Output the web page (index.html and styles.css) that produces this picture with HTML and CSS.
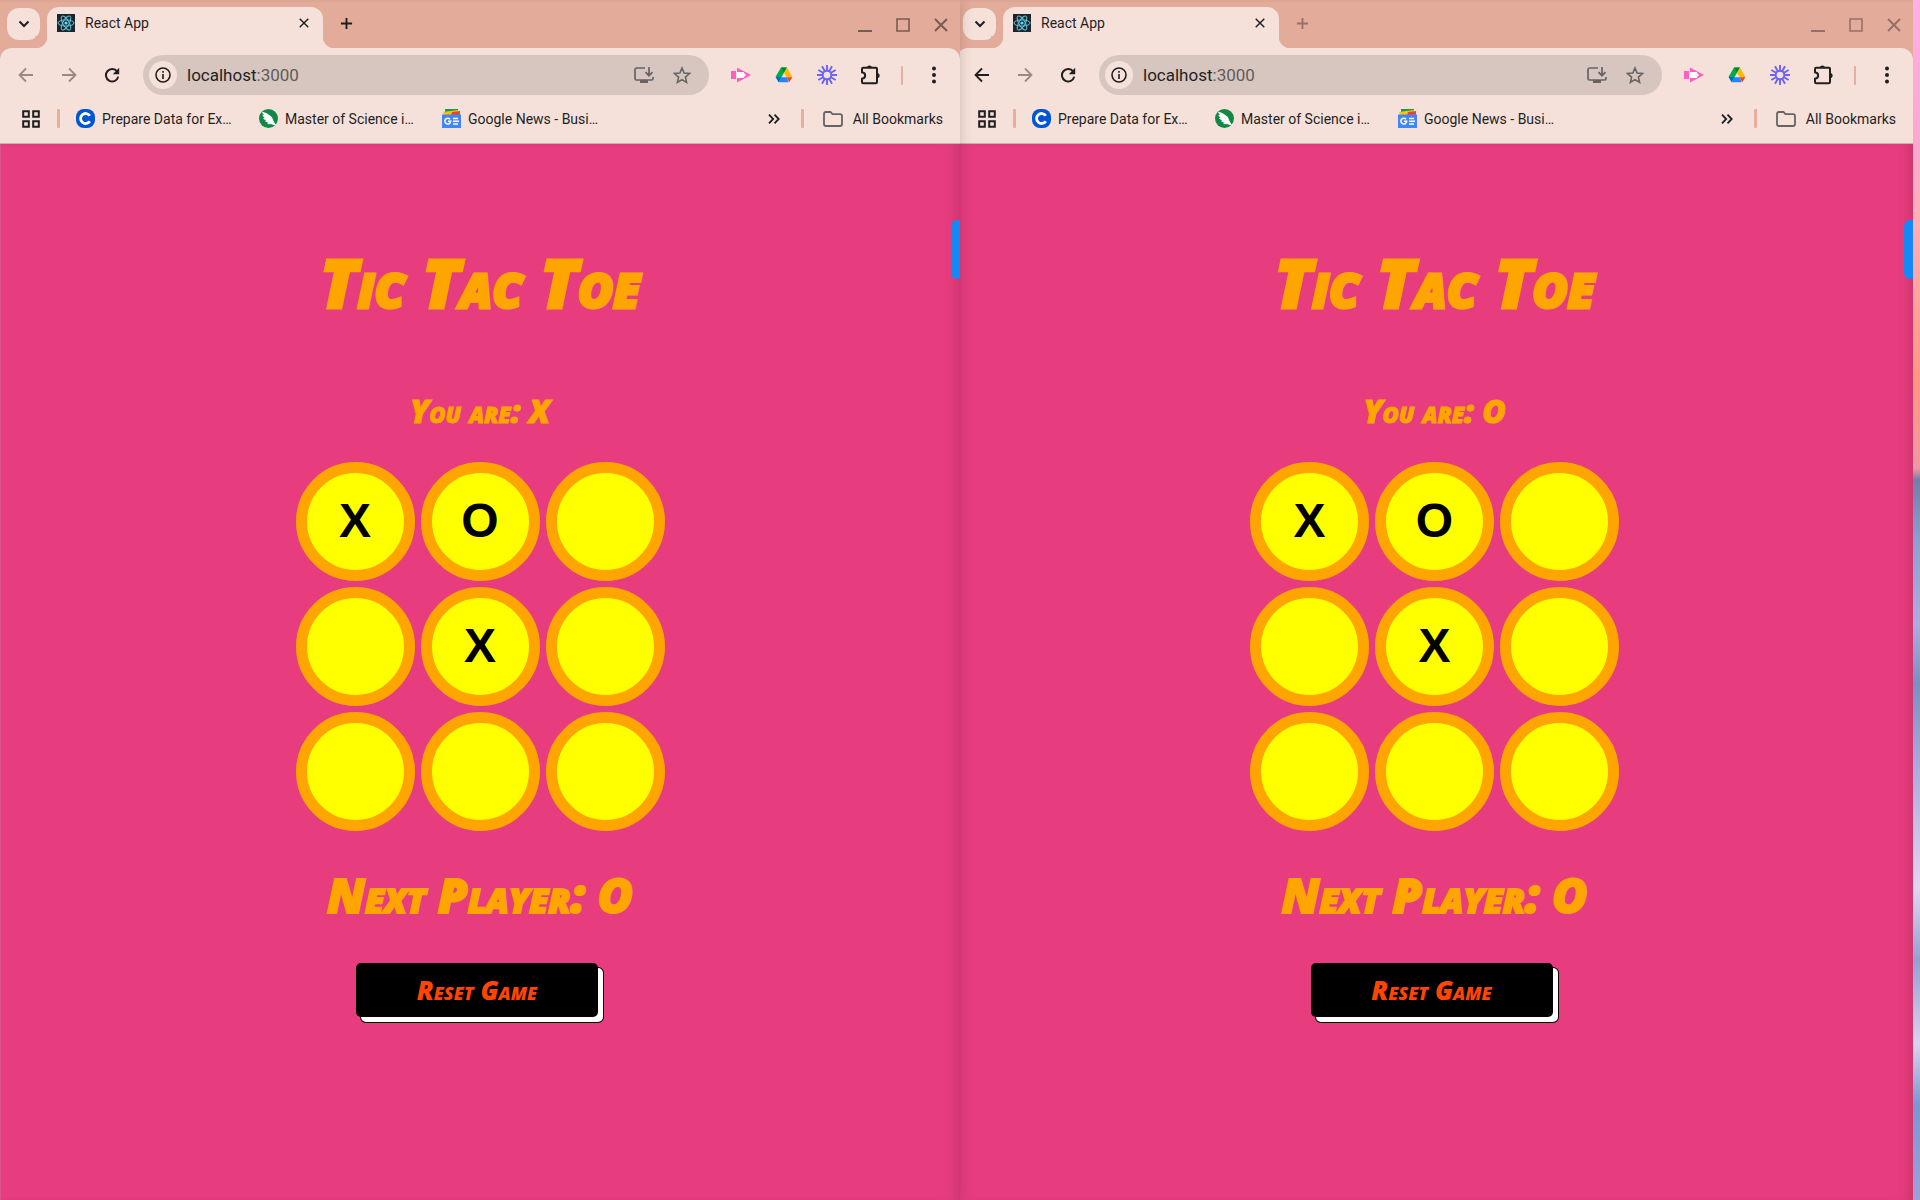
FILE: index.html
```html
<!DOCTYPE html>
<html lang="en">
<head>
<meta charset="utf-8">
<title>Tic Tac Toe</title>
<link rel="stylesheet" href="styles.css">
</head>
<body>
<svg class="sprite" aria-hidden="true">
  <symbol id="chevron" viewBox="0 0 12 12"><path d="M1.5 3.5L6 8l4.500-4.500" fill="none" stroke="currentColor" stroke-width="2"/></symbol>
  <symbol id="react" viewBox="0 0 18 18"><rect width="18" height="18" fill="#20232a"/><g fill="none" stroke="#58c4dc"><ellipse cx="9" cy="9" rx="8" ry="3.100"/><ellipse cx="9" cy="9" rx="8" ry="3.100" transform="rotate(60 9 9)"/><ellipse cx="9" cy="9" rx="8" ry="3.100" transform="rotate(120 9 9)"/></g><circle cx="9" cy="9" r="1.600" fill="#61dafb"/></symbol>
  <symbol id="cross" viewBox="0 0 14 14"><path d="M1 1l12 12M13 1L1 13" fill="none" stroke="currentColor" stroke-width="2"/></symbol>
  <symbol id="plus" viewBox="0 0 14 14"><path d="M7 1v12M1 7h12" fill="none" stroke="currentColor" stroke-width="2"/></symbol>
  <symbol id="minimize" viewBox="0 0 14 14"><path d="M0 13h14" stroke="currentColor" stroke-width="2"/></symbol>
  <symbol id="maximize" viewBox="0 0 14 14"><path d="M1 1h12v12H1z" fill="none" stroke="currentColor" stroke-width="1.600"/></symbol>
  <symbol id="back" viewBox="0 0 16 16"><path d="M15 8H2M8 1.500L1.500 8 8 14.500" fill="none" stroke="currentColor" stroke-width="1.800"/></symbol>
  <symbol id="forward" viewBox="0 0 16 16"><path d="M1 8h13M8 1.500L14.500 8 8 14.500" fill="none" stroke="currentColor" stroke-width="1.800"/></symbol>
  <symbol id="reload" viewBox="0 0 16 16"><path d="M13.200 4.700A6.200 6.200 0 1 0 14.200 9.600" fill="none" stroke="currentColor" stroke-width="2"/><path d="M15.200.8v6.400H8.800z" fill="currentColor"/></symbol>
  <symbol id="info" viewBox="0 0 16 16"><circle cx="8" cy="8" r="7" fill="none" stroke="currentColor" stroke-width="1.600"/><path d="M8 7v5M8 4v1.700" stroke="currentColor" stroke-width="1.600"/></symbol>
  <symbol id="install" viewBox="0 0 20 18"><path d="M11 2H3Q1 2 1 4v8.500q0 1.500 1.500 1.500h15q1.500 0 1.500-1.500V11" fill="none" stroke="currentColor" stroke-width="1.700"/><path d="M6 14h8v3H6z" fill="currentColor"/><path d="M15 1v8.500M11.500 6.200L15 9.700l3.500-3.500" fill="none" stroke="currentColor" stroke-width="1.700"/></symbol>
  <symbol id="star" viewBox="0 0 18 18"><path d="M9 2l2.100 5 5.400.5-4.100 3.600 1.200 5.300L9 13.600l-4.600 2.800 1.200-5.300L1.500 7.500 6.900 7z" fill="none" stroke="currentColor" stroke-width="1.600"/></symbol>
  <symbol id="arrow-ext" viewBox="0 0 20 16"><path d="M0 4h5v8H0z" fill="#ff5fc0"/><path d="M6 .5L20 8 6 15.500z" fill="#ff5fc0"/><path d="M6 5h7v1l2 2-2 2v1H6z" fill="#fff"/></symbol>
  <symbol id="drive" viewBox="0 0 18 16"><path d="M6 .5h6L9 5.700 3.800 15.200.6 9.800z" fill="#00ac47"/><path d="M6 .5h6L9 5.700z" fill="#00832d"/><path d="M12 .5l5.400 9.500h-5.900L9 5.700z" fill="#ffba00"/><path d="M.6 10h5.900l-2.700 5.200z" fill="#0066da"/><path d="M6 10.300h6l1.500 4.900H3.800z" fill="#2684fc"/><path d="M11.700 10.300h5.700l-3.200 4.900z" fill="#ea4335"/></symbol>
  <symbol id="burst" viewBox="0 0 20 20"><g stroke="#6c63f5" stroke-width="1.900"><path d="M10 0v20M0 10h20M5 1.300l10 17.400M15 1.300L5 18.700M1.300 5l17.400 10M1.300 15L18.700 5"/></g><circle cx="10" cy="10" r="5.300" fill="#6c63f5"/><circle cx="10" cy="10" r="3.300" fill="#f5e1da"/></symbol>
  <symbol id="puzzle" viewBox="0 0 20 20"><path d="M2 4q0-1.200 1.200-1.200H16q1 0 1 1V17q0 1.200-1.200 1.200H3.200Q2 18.200 2 17v-3.300c4.200-.4 4.200-6 0-6.400z" fill="none" stroke="currentColor" stroke-width="2"/><path d="M6.800 3a2.600 2.600 0 0 1 5.200 0zM17 8a2.600 2.600 0 0 1 0 5.200z" fill="currentColor"/></symbol>
  <symbol id="dots" viewBox="0 0 4 18"><g fill="currentColor"><circle cx="2" cy="2.500" r="2"/><circle cx="2" cy="9" r="2"/><circle cx="2" cy="15.500" r="2"/></g></symbol>
  <symbol id="apps" viewBox="0 0 18 18"><path d="M1.200 1.200h5.600v5.600H1.200zM11.200 1.200h5.600v5.600h-5.600zM1.200 11.200h5.600v5.600H1.200zM11.200 11.200h5.600v5.600h-5.600z" fill="none" stroke="currentColor" stroke-width="2"/></symbol>
  <symbol id="coursera" viewBox="0 0 19 19"><rect width="19" height="19" rx="8" fill="#0056d2"/><path d="M13.800 6.800A5 5 0 1 0 13.800 12.200" fill="none" stroke="#fff" stroke-width="2.800"/></symbol>
  <symbol id="leaf" viewBox="0 0 19 19"><circle cx="9.500" cy="9.500" r="9.500" fill="#118845"/><path d="M3.500 3.200l4 1.300 5 3.600 1.500 3.800 2.500 4.400-3.800-1.500-4-.2 1.800-.8-4-1.600 2-.2-4-2.600 2 0-2.700-3 1.800.3z" fill="#fff" stroke="#fff" stroke-width=".8"/></symbol>
  <symbol id="gnews" viewBox="0 0 19 19"><path d="M3 0h13v6H3z" fill="#0c9d58"/><path d="M1 3l15-2 1 5H2z" fill="#ffc107"/><path d="M10 3l8-1v5h-9z" fill="#ea4335"/><path d="M0 5.500h19V19H0z" fill="#4285f4"/><path d="M8 10.200A2.900 2.900 0 1 0 8.700 12.300H6" fill="none" stroke="#fff" stroke-width="1.500"/><path d="M11 9.500h5M11 12.300h6M11 15h5" stroke="#fff" stroke-width="1.500"/></symbol>
  <symbol id="more" viewBox="0 0 12 10"><path d="M1 .7L5.200 5 1 9.300M6.500.7L10.700 5 6.500 9.300" fill="none" stroke="currentColor" stroke-width="1.800"/></symbol>
  <symbol id="folder" viewBox="0 0 20 16"><path d="M1 3q0-2 2-2h4.500l2 2.200H17q2 0 2 2V13q0 2-2 2H3q-2 0-2-2z" fill="none" stroke="currentColor" stroke-width="1.800"/></symbol>
</svg>

<main class="desktop">
  <section class="window window-front">
    <header class="tabstrip">
      <button class="tab-search" aria-label="Search tabs"><svg width="12" height="12"><use href="#chevron"/></svg></button>
      <div class="tab">
        <svg width="18" height="18"><use href="#react"/></svg>
        <span class="tab-title">React App</span>
        <button class="plain" aria-label="Close tab"><svg width="10" height="10"><use href="#cross"/></svg></button>
      </div>
      <button class="plain new-tab" aria-label="New tab"><svg width="13" height="13"><use href="#plus"/></svg></button>
      <div class="controls">
        <button class="plain" aria-label="Minimize"><svg width="14" height="14"><use href="#minimize"/></svg></button>
        <button class="plain" aria-label="Maximize"><svg width="14" height="14"><use href="#maximize"/></svg></button>
        <button class="plain" aria-label="Close"><svg width="14" height="14"><use href="#cross"/></svg></button>
      </div>
    </header>
    <div class="toolbar">
      <nav class="nav">
        <button class="plain dim" aria-label="Back"><svg width="16" height="16"><use href="#back"/></svg></button>
        <button class="plain dim" aria-label="Forward"><svg width="16" height="16"><use href="#forward"/></svg></button>
        <button class="plain" aria-label="Reload"><svg width="16" height="16"><use href="#reload"/></svg></button>
      </nav>
      <div class="omnibox">
        <button class="site-info" aria-label="Site information"><svg width="16" height="16"><use href="#info"/></svg></button>
        <span class="url">localhost<span class="port">:3000</span></span>
        <button class="plain soft" aria-label="Install"><svg width="20" height="18"><use href="#install"/></svg></button>
        <button class="plain soft" aria-label="Bookmark"><svg width="18" height="18"><use href="#star"/></svg></button>
      </div>
      <div class="extensions">
        <button class="plain ext" aria-label="Recorder"><svg width="20" height="16"><use href="#arrow-ext"/></svg></button>
        <button class="plain ext" aria-label="Drive"><svg width="18" height="16"><use href="#drive"/></svg></button>
        <button class="plain ext" aria-label="Loom"><svg width="20" height="20"><use href="#burst"/></svg></button>
        <button class="plain ext" aria-label="Extensions"><svg width="20" height="20"><use href="#puzzle"/></svg></button>
      </div>
      <span class="divider"></span>
      <button class="plain menu" aria-label="Menu"><svg width="4" height="18"><use href="#dots"/></svg></button>
    </div>
    <nav class="bookmarks">
      <button class="plain apps" aria-label="Apps"><svg width="18" height="18"><use href="#apps"/></svg></button>
      <span class="divider wide"></span>
      <a class="bookmark" href="#"><svg width="19" height="19"><use href="#coursera"/></svg><span>Prepare Data for Ex…</span></a>
      <a class="bookmark" href="#"><svg width="19" height="19"><use href="#leaf"/></svg><span>Master of Science i…</span></a>
      <a class="bookmark" href="#"><svg width="19" height="19"><use href="#gnews"/></svg><span>Google News - Busi…</span></a>
      <button class="plain more" aria-label="More bookmarks"><svg width="12" height="10"><use href="#more"/></svg></button>
      <span class="divider wide"></span>
      <a class="all" href="#"><svg class="soft" width="20" height="16"><use href="#folder"/></svg><span>All Bookmarks</span></a>
    </nav>
    <div class="page">
      <h1 class="title">Tic Tac Toe</h1>
      <h2 class="role">You are: X</h2>
      <div class="board">
        <button class="cell">X</button><button class="cell">O</button><button class="cell" aria-label="Empty"></button>
        <button class="cell" aria-label="Empty"></button><button class="cell">X</button><button class="cell" aria-label="Empty"></button>
        <button class="cell" aria-label="Empty"></button><button class="cell" aria-label="Empty"></button><button class="cell" aria-label="Empty"></button>
      </div>
      <h2 class="next">Next Player: O</h2>
      <button class="reset">Reset Game</button>
      <button class="side-handle" aria-label="Open side panel"></button>
    </div>
  </section>

  <section class="window window-back">
    <header class="tabstrip">
      <button class="tab-search" aria-label="Search tabs"><svg width="12" height="12"><use href="#chevron"/></svg></button>
      <div class="tab">
        <svg width="18" height="18"><use href="#react"/></svg>
        <span class="tab-title">React App</span>
        <button class="plain" aria-label="Close tab"><svg width="10" height="10"><use href="#cross"/></svg></button>
      </div>
      <button class="plain new-tab" aria-label="New tab"><svg width="13" height="13"><use href="#plus"/></svg></button>
      <div class="controls">
        <button class="plain" aria-label="Minimize"><svg width="14" height="14"><use href="#minimize"/></svg></button>
        <button class="plain" aria-label="Maximize"><svg width="14" height="14"><use href="#maximize"/></svg></button>
        <button class="plain" aria-label="Close"><svg width="14" height="14"><use href="#cross"/></svg></button>
      </div>
    </header>
    <div class="toolbar">
      <nav class="nav">
        <button class="plain" aria-label="Back"><svg width="16" height="16"><use href="#back"/></svg></button>
        <button class="plain dim" aria-label="Forward"><svg width="16" height="16"><use href="#forward"/></svg></button>
        <button class="plain" aria-label="Reload"><svg width="16" height="16"><use href="#reload"/></svg></button>
      </nav>
      <div class="omnibox">
        <button class="site-info" aria-label="Site information"><svg width="16" height="16"><use href="#info"/></svg></button>
        <span class="url">localhost<span class="port">:3000</span></span>
        <button class="plain soft" aria-label="Install"><svg width="20" height="18"><use href="#install"/></svg></button>
        <button class="plain soft" aria-label="Bookmark"><svg width="18" height="18"><use href="#star"/></svg></button>
      </div>
      <div class="extensions">
        <button class="plain ext" aria-label="Recorder"><svg width="20" height="16"><use href="#arrow-ext"/></svg></button>
        <button class="plain ext" aria-label="Drive"><svg width="18" height="16"><use href="#drive"/></svg></button>
        <button class="plain ext" aria-label="Loom"><svg width="20" height="20"><use href="#burst"/></svg></button>
        <button class="plain ext" aria-label="Extensions"><svg width="20" height="20"><use href="#puzzle"/></svg></button>
      </div>
      <span class="divider"></span>
      <button class="plain menu" aria-label="Menu"><svg width="4" height="18"><use href="#dots"/></svg></button>
    </div>
    <nav class="bookmarks">
      <button class="plain apps" aria-label="Apps"><svg width="18" height="18"><use href="#apps"/></svg></button>
      <span class="divider wide"></span>
      <a class="bookmark" href="#"><svg width="19" height="19"><use href="#coursera"/></svg><span>Prepare Data for Ex…</span></a>
      <a class="bookmark" href="#"><svg width="19" height="19"><use href="#leaf"/></svg><span>Master of Science i…</span></a>
      <a class="bookmark" href="#"><svg width="19" height="19"><use href="#gnews"/></svg><span>Google News - Busi…</span></a>
      <button class="plain more" aria-label="More bookmarks"><svg width="12" height="10"><use href="#more"/></svg></button>
      <span class="divider wide"></span>
      <a class="all" href="#"><svg class="soft" width="20" height="16"><use href="#folder"/></svg><span>All Bookmarks</span></a>
    </nav>
    <div class="page">
      <h1 class="title">Tic Tac Toe</h1>
      <h2 class="role">You are: O</h2>
      <div class="board">
        <button class="cell">X</button><button class="cell">O</button><button class="cell" aria-label="Empty"></button>
        <button class="cell" aria-label="Empty"></button><button class="cell">X</button><button class="cell" aria-label="Empty"></button>
        <button class="cell" aria-label="Empty"></button><button class="cell" aria-label="Empty"></button><button class="cell" aria-label="Empty"></button>
      </div>
      <h2 class="next">Next Player: O</h2>
      <button class="reset">Reset Game</button>
      <button class="side-handle" aria-label="Open side panel"></button>
    </div>
  </section>
</main>
</body>
</html>
```
FILE: styles.css
```css
* { box-sizing: border-box; }

body {
  margin: 0;
  font-family: Roboto, "Liberation Sans", sans-serif;
  font-size: 14px;
  color: #1f1f1f;
}

button { font: inherit; color: inherit; border: 0; padding: 0; cursor: pointer; }
a { color: inherit; text-decoration: none; }
svg { display: block; flex: none; }
.sprite { position: absolute; width: 0; height: 0; }

/* Desktop with two windows side by side over the wallpaper */
.desktop {
  display: grid;
  grid-template-columns: minmax(0, 956fr) minmax(0, 957fr);
  min-height: 100vh;
  padding-right: 7px;
  background: linear-gradient(#ffb0e4 0%, #f9a8cf 12%, #ffb0b8 18%, #ff9684 32%, #ee98a4 39%, #747ea8 40%, #8c9fd0 45%, #b2aade 52%, #7890c0 57%, #b0a8dc 64%, #e4d4f0 74%, #94a0d0 80%, #e0d0ee 87%, #7898d0 92%, #a0a0d8 100%);
}

.window {
  display: flex;
  flex-direction: column;
  min-width: 0;
  background: #e3ac9a;
}
.window-front { position: relative; z-index: 1; margin-right: -4px; box-shadow: 0 0 12px rgba(60, 20, 20, .2); }

.plain {
  display: flex;
  align-items: center;
  justify-content: center;
  background: none;
}
.dim { color: #9b8985; }
.soft { color: #666365; }

/* Tab strip */
.tabstrip {
  display: flex;
  height: 48px;
  padding: 7px 12px 0 7px;
  box-shadow: inset 0 2px 0 #dda796;
}
.tab-search {
  display: flex;
  align-items: center;
  justify-content: center;
  width: 33px;
  height: 32px;
  margin-top: 1px;
  border-radius: 12px;
  background: #f5e1da;
}
.tab {
  position: relative;
  display: flex;
  gap: 10px;
  width: 276px;
  height: 41px;
  margin-left: 7px;
  padding: 0 14px 9px 10px;
  align-items: center;
  border-radius: 12px 12px 0 0;
  background: #f5e1da;
}
.tab::before, .tab::after {
  content: "";
  position: absolute;
  bottom: 0;
  width: 12px;
  height: 12px;
}
.tab::before { right: 100%; background: radial-gradient(circle at 0 0, #e3ac9a 12px, #f5e1da 13px); }
.tab::after { left: 100%; background: radial-gradient(circle at 100% 0, #e3ac9a 12px, #f5e1da 13px); }
.tab-title { flex: 1; }
.new-tab { width: 46px; height: 32px; }
.window-back .new-tab { color: #94716a; }
.controls { display: flex; gap: 24px; margin-left: auto; height: 36px; color: #7a5a52; }
.window-back .controls { color: #957068; }

/* Address row */
.toolbar {
  display: flex;
  align-items: center;
  height: 54px;
  padding: 0 24px 0 18px;
  border-radius: 12px 12px 0 0;
  background: #f5e1da;
}
.nav { display: flex; gap: 27px; width: 125px; }
.omnibox {
  display: flex;
  flex: 1;
  align-items: center;
  gap: 19px;
  min-width: 0;
  height: 40px;
  padding: 0 18px 0 6px;
  border-radius: 20px;
  background: #d7c6bf;
}
.site-info {
  display: flex;
  align-items: center;
  justify-content: center;
  width: 28px;
  height: 28px;
  border-radius: 50%;
  background: #f5e1da;
}
.url { flex: 1; margin-left: -9px; font-size: 17px; }
.port { color: #625b5b; }
.extensions { display: flex; align-items: center; margin: 0 10px; }
.ext { width: 43px; }
.menu { margin-left: 29px; }
.divider { width: 2px; height: 19px; border-radius: 1px; background: #e6ae9d; }
.wide { width: 3px; }

/* Bookmarks row */
.bookmarks {
  display: flex;
  align-items: center;
  height: 42px;
  padding: 0 17px 8px 22px;
  border-bottom: 1px solid #c9b0a8;
  background: #f5e1da;
}
.apps { margin-right: 17px; }
.bookmark {
  display: flex;
  align-items: center;
  gap: 7px;
  width: 167px;
  margin: 0 0 0 16px;
  white-space: nowrap;
}
.more { margin: 0 21px 0 auto; }
.all { display: flex; align-items: center; gap: 10px; margin-left: 19px; white-space: nowrap; }

/* Game page */
.page {
  position: relative;
  display: flex;
  flex: 1;
  flex-direction: column;
  align-items: center;
  padding: 98px 0 60px;
  background: #e73c7e;
  box-shadow: inset -12px 0 12px -8px rgba(140, 40, 70, .3), inset 1px 0 0 #dc5788;
}
.title, .role, .next, .reset {
  margin: 0;
  font-family: "Permanent Marker", "Open Sans", sans-serif;
  font-variant: small-caps;
  font-style: italic;
  font-weight: 800;
  color: #ffa500;
}
.title { font-size: 68px; line-height: 80px; -webkit-text-stroke: 3px #ffa500; }
.role { margin-top: 69px; font-size: 32px; line-height: 40px; -webkit-text-stroke: 1px #ffa500; }
.board {
  display: grid;
  grid-template-columns: repeat(3, 119px);
  grid-auto-rows: 119px;
  gap: 6px;
  margin-top: 31px;
}
.cell {
  padding-bottom: 2px;
  border: 11px solid #ffa500;
  border-radius: 50%;
  background: #ff0;
  color: #000;
  font: bold 48px/1 "Liberation Sans", Arial, sans-serif;
}
.next { margin-top: 36px; font-size: 48px; line-height: 56px; -webkit-text-stroke: 2px #ffa500; }
.reset {
  width: 242px;
  height: 54px;
  margin: 40px 6px 0 0;
  border-radius: 5px;
  background: #000;
  box-shadow: 5px 5px 0 #fff, 5px 5px 0 1px #000;
  color: #ff4500;
  font-size: 26px;
}
.side-handle {
  position: absolute;
  top: 76px;
  right: 0;
  width: 9px;
  height: 59px;
  border-radius: 6px 0 0 6px;
  background: #1489f5;
}
```
